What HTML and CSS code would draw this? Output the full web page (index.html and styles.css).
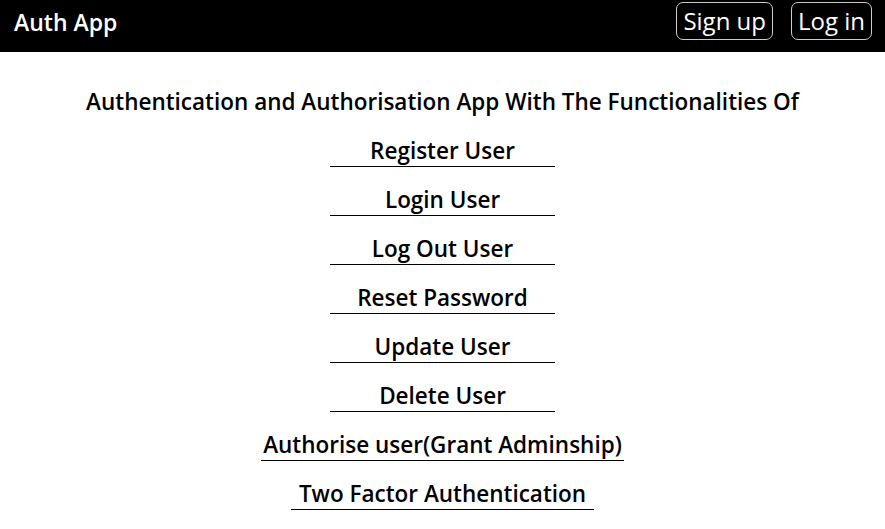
FILE: index.html
```html
<!DOCTYPE html>
<html>
<head>
<meta charset="utf-8">
<link rel="stylesheet" href="styles.css">
</head>
<body>
<nav class="navbar">
  <span class="brand">Auth App</span>
  <div class="nav-actions">
    <a class="nav-btn" href="#">Sign up</a>
    <a class="nav-btn" href="#">Log in</a>
  </div>
</nav>
<main class="content">
  <h1 class="title">Authentication and Authorisation App With The Functionalities Of</h1>
  <ul class="features">
    <li class="feature">Register User</li>
    <li class="feature">Login User</li>
    <li class="feature">Log Out User</li>
    <li class="feature">Reset Password</li>
    <li class="feature">Update User</li>
    <li class="feature">Delete User</li>
    <li class="feature">Authorise user(Grant Adminship)</li>
    <li class="feature feature-wide">Two Factor Authentication</li>
  </ul>
</main>
</body>
</html>
```
FILE: styles.css
```css
* { box-sizing: border-box; }
body {
  margin: 0;
  font-family: "Open Sans", "Noto Sans", sans-serif;
  background: #fff;
  color: #000;
}
.navbar {
  height: 52px;
  background: #000;
  display: flex;
  align-items: center;
  justify-content: space-between;
  padding: 0 13px 0 14px;
}
.brand {
  color: #fff;
  font-size: 23px;
  font-weight: 600;
  margin-top: -8px;
}
.nav-actions {
  display: flex;
  gap: 18px;
  margin-top: -10px;
}
.nav-btn {
  color: #fff;
  text-decoration: none;
  font-size: 24px;
  line-height: 36px;
  padding: 0 6px;
  border: 1px solid #ccc;
  border-radius: 7px;
}
.content {
  display: flex;
  flex-direction: column;
  align-items: center;
  padding-top: 87px;
  padding-top: 35px;
}
.title {
  margin: 0;
  font-size: 22.5px;
  font-weight: 600;
  line-height: 30px;
}
.features {
  list-style: none;
  margin: 19px 0 0;
  padding: 0;
  display: flex;
  flex-direction: column;
  align-items: center;
  gap: 18px;
}
.feature {
  min-width: 225px;
  text-align: center;
  font-size: 22.5px;
  font-weight: 600;
  line-height: 30px;
  padding: 0 2px;
  border-bottom: 1px solid #000;
}
.feature-wide {
  padding: 0 8px;
}
```
